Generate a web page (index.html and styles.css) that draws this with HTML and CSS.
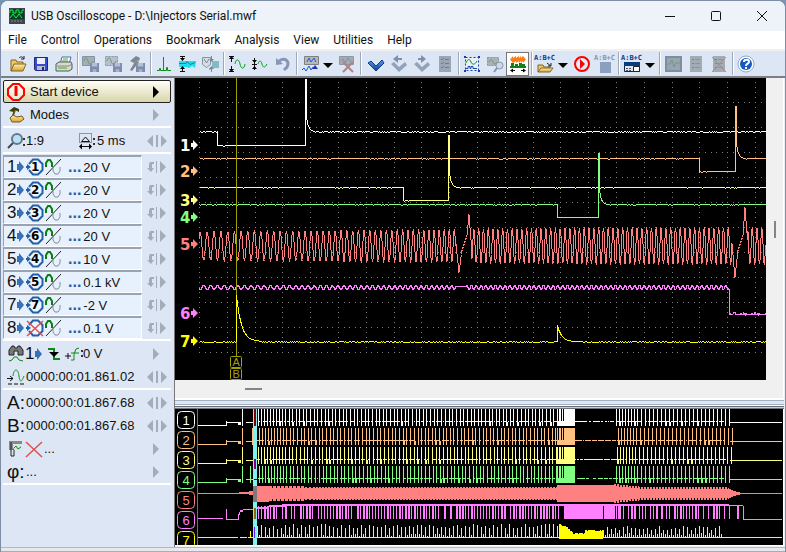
FILE: index.html
```html
<!DOCTYPE html>
<html lang="en">
<head>
  <meta charset="UTF-8">
  <meta name="viewport" content="width=device-width, initial-scale=1.0">
  <title>USB Oscilloscope</title>
  <link rel="stylesheet" href="styles.css">
</head>
<body>
  <!-- icon set -->
  <svg class="defs" width="0" height="0" aria-hidden="true">
    <linearGradient id="gold" x1="0" y1="0" x2="0" y2="1"><stop offset="0" stop-color="#fff0a8"/><stop offset="1" stop-color="#d9a032"/></linearGradient>
    <linearGradient id="blue" x1="0" y1="0" x2="0" y2="1"><stop offset="0" stop-color="#5aa0e8"/><stop offset="1" stop-color="#0a3c90"/></linearGradient>
    <symbol id="open" viewBox="0 0 18 18"><path d="M2 16V5h5l1 2h6v3" fill="#f0c860" stroke="#80642c"/><path d="M2 16l3-7h12l-3 7z" fill="url(#gold)" stroke="#80642c"/><path d="M10 3c2-2 4-1 5 1m0-3v3h-3" fill="none" stroke="#222"/></symbol>
    <symbol id="save" viewBox="0 0 18 18"><path d="M2.500 2.500h13v13h-12l-1-1z" fill="#3a4cc8" stroke="#22287c"/><path d="M5 3h8v6H5z" fill="#e8f0ff"/><path d="M5 11h8v4H5z" fill="#b8bcd0"/><path d="M10 12h2v3h-2z" fill="#22287c"/></symbol>
    <symbol id="print" viewBox="0 0 18 18"><path d="M5 9l2-7h9l-2 7z" fill="#fff" stroke="#4c6c9c"/><path d="M8 4h5M7 6h6" stroke="#50a050"/><path d="M1 9l3-2h12l1 2v5l-3 2H1z" fill="#d8dcc8" stroke="#505860"/><path d="M2 11h12M14 11l3-2" stroke="#808890" fill="none"/><path d="M3 13h9" stroke="#30b030"/></symbol>
    <symbol id="disk" viewBox="0 0 10 10"><path d="M0 0h10v10H0z" fill="#7c8cac"/><path d="M2 0h6v4H2z" fill="#b4bfd4"/><path d="M3 7h4v3H3z" fill="#a8b4c8"/></symbol>
    <symbol id="wavesave" viewBox="0 0 18 18"><path d="M.5 1.500h12v9H.5z" fill="#a2adb4" stroke="#8592a0"/><path d="M2 6c1-4 3-4 4 0s3 4 5 0" fill="none" stroke="#6f9480"/><use href="#disk" x="8" y="8" width="9" height="9"/></symbol>
    <symbol id="wavecut" viewBox="0 0 18 18"><path d="M.5 1.500h12v9H.5z" fill="#b5c0cb" stroke="#8592a0" stroke-dasharray="2 1"/><path d="M2 6c1-4 3-4 4 0s3 4 5 0" fill="none" stroke="#6f9480"/><use href="#disk" x="8" y="8" width="9" height="9"/></symbol>
    <symbol id="hammersave" viewBox="0 0 18 18"><path d="M2 6l6-5 4 2-1 3-3-1-2 3zM8 5L2 15l2 1 7-9z" fill="#7c878e"/><use href="#disk" x="8" y="8" width="9" height="9"/></symbol>
    <symbol id="peak" viewBox="0 0 18 18"><path d="M2 15.500h2.500v-2h1v2h3V2v13.500h3v-3h1v3H16" fill="none" stroke="#0a9018"/></symbol>
    <symbol id="band" viewBox="0 0 18 18"><path d="M1 6h17l-1 7-3-2-3 2-3-1H1z" fill="#1ce0f0"/><path d="M1 8.500h7l1-2 3 3 5-2" fill="none" stroke="#088898"/><path d="M2 1.500h5M2 16.500h5M4.500 2v3M4.500 12v4" stroke="#111"/><path d="M2 3h5L4.500 6zM2 14h5l-2.500-3z"/></symbol>
    <symbol id="volt" viewBox="0 0 18 18"><path d="M1.500 2.500h8v7l-4 3-4-3z" fill="#d8dee4" stroke="#8794a0"/><path d="M3 4l2.500 4L8 4M8 14h3" fill="none" stroke="#7b8893"/><path d="M11 6h7v7h-7z" fill="#82bcc2"/><path d="M10.500 1v5M10.500 12v5" stroke="#7c8993"/><path d="M8 4h5l-2.500 3zM8 14h5l-2.500-3z" fill="#7c8993"/></symbol>
    <symbol id="fit" viewBox="0 0 18 18"><path d="M1 1.500h5M1 16.500h5M3.500 2v14" stroke="#111" stroke-dasharray="5 4"/><path d="M1 4h5L3.500 1zM1 14h5l-2.500 3z"/><path d="M7 9c1-6 4-5 5 0s4 6 5 0" fill="none" stroke="#08a018"/></symbol>
    <symbol id="fitsmall" viewBox="0 0 18 18"><path d="M3.500 3v12M1 9.500h5" stroke="#111"/><path d="M1 5h5L3.500 8zM1 14h5l-2.500-3z"/><path d="M7 9c1-4 3-4 4 0s3 4 5 0" fill="none" stroke="#08a018"/></symbol>
    <symbol id="undo" viewBox="0 0 18 18"><path d="M5 6c6-4 11 0 8 6l-3 3" fill="none" stroke="#8795b8" stroke-width="3"/><path d="M2 10V3l7 6z" fill="#8795b8"/></symbol>
    <symbol id="view" viewBox="0 0 18 18"><path d="M3.500 1.500h14v8h-14z" fill="#b8b8b8" stroke="#808080"/><path d="M6 7l2-4 2 4 3-4 2 4M1 15l2-2 2 3 3-5 2 4 2-3" fill="none" stroke="#1858d8"/><path d="M11 14l3-4 3 4z" fill="#2030c0"/></symbol>
    <symbol id="viewoff" viewBox="0 0 18 18"><path d="M1.500 1.500h14v8h-14z" fill="#a6abb1" stroke="#9098a3"/><path d="M3 6l2-2 2 4 3-5 3 4" fill="none" stroke="#7d8fad"/><path d="M5 7l10 10M15 7L5 17" stroke="#ae8289" stroke-width="2"/></symbol>
    <symbol id="check" viewBox="0 0 18 18"><path d="M1 8l3-2 5 5 6-6 2 3-8 8z" fill="url(#blue)" stroke="#0b3c8a"/></symbol>
    <symbol id="checkprev" viewBox="0 0 18 18"><path d="M1 9l3-2 5 5 6-5 2 3-8 7z" fill="#91a2b9"/><path d="M3 4l5-4v3h4v2H8v3z" fill="#7d91ad"/></symbol>
    <symbol id="checknext" viewBox="0 0 18 18"><path d="M1 9l3-2 5 5 6-5 2 3-8 7z" fill="#91a2b9"/><path d="M13 4L8 0v3H5v2h3v3z" fill="#7d91ad"/></symbol>
    <symbol id="list" viewBox="0 0 18 18"><path d="M3 1h12v16H3z" fill="#98a6b8"/><path d="M5 4l1 1 2-2M9 4.500h4M5 8l1 1 2-2M9 8.500h4M5 12l1 1 2-2M9 12.500h4" fill="none" stroke="#6a7d98"/></symbol>
    <symbol id="select" viewBox="0 0 18 18"><path d="M2.500 2.500h13v13h-13z" fill="#e8f0f8" stroke="#2038a8" stroke-dasharray="2 2"/><path d="M1 1h2v2H1zM15 1h2v2h-2zM1 15h2v2H1zM15 15h2v2h-2z" fill="#2038a8"/><path d="M3 8c2-5 4-4 5-1s4 3 6-1" fill="none" stroke="#109018"/><path d="M3 13.500h2v-2h2v2h1v-2h2v2h4" fill="none" stroke="#1848a8"/></symbol>
    <symbol id="find" viewBox="0 0 18 18"><path d="M1.500 2.500h11v8h-11z" fill="#aab2b6" stroke="#8794a0" stroke-dasharray="2 1"/><path d="M3 7c1-3 3-3 4 0s3 2 4 0" fill="none" stroke="#7c927d"/><circle cx="13.500" cy="10.500" r="3.500" fill="#ced9e6" stroke="#8496b3"/><path d="M11 13l-3 4" stroke="#8496b3" stroke-width="2"/></symbol>
    <symbol id="burst" viewBox="0 0 18 18"><path d="M1 4.500L4 1v2l3-2v2l3-2v2l2-2v2l2-2 3 3.500L14 8V6l-2 2V6l-2 2V6L7 8V6L4 8z" fill="#ff7c10"/><path d="M1 12h2V9h1v3h3v-2h1v2h3V9h1v3h2v-2h1v2h2" fill="none" stroke="#108018" stroke-width="2"/><path d="M2 15.500h4M12 15.500h4" stroke="#111"/><path d="M1 15.500l3-2v4zM17 15.500l-3-2v4z"/></symbol>
    <symbol id="play" viewBox="0 0 18 18"><circle cx="9" cy="9" r="7" fill="#fff" fill-opacity=".2" stroke="red" stroke-width="2"/><path d="M7 4l5 5-5 5z" fill="red"/></symbol>
    <symbol id="folder2" viewBox="0 0 18 11"><path d="M2 10V3h5l1 2h6v2" fill="#f0c860" stroke="#80642c"/><path d="M2 10l3-4h12l-3 4z" fill="url(#gold)" stroke="#80642c"/><path d="M11 1l4 3m0-3v3h-3" fill="none" stroke="#222"/></symbol>
    <symbol id="panel2" viewBox="0 0 18 11"><path d="M1.500.5h15v9h-15z" fill="#dce6f4" stroke="#0a2850"/><path d="M1 0h16v4H1z" fill="#0a3c78"/><path d="M3 6.500h6M3 8.500h6" stroke="#555" stroke-dasharray="2 1"/><path d="M10.500 4.500h6v5h-6z" fill="#fff" stroke="#222"/></symbol>
    <symbol id="stop2" viewBox="0 0 18 11"><path d="M4 0h11v11H4z" fill="#8aa0be"/></symbol>
    <symbol id="chart" viewBox="0 0 18 18"><path d="M2 2h15v14H2z" fill="#97a4b2" stroke="#7f8d9d" stroke-width="2"/><path d="M3 9h3l2-4 2 7 2-4h4" fill="none" stroke="#6f9a82"/></symbol>
    <symbol id="sheet" viewBox="0 0 18 18"><path d="M3 1h12v16H3z" fill="#a1acb5"/><path d="M5 4.500h2M5 8.500h2M5 12.500h2" stroke="#5c966c"/><path d="M8 4.500h5M8 8.500h5M8 12.500h5" stroke="#8794a2"/></symbol>
    <symbol id="sheetx" viewBox="0 0 18 18"><use href="#sheet"/><path d="M2 2l14 15M16 2L2 17" stroke="#b38188"/></symbol>
    <symbol id="help" viewBox="0 0 18 18"><circle cx="9" cy="9" r="8" fill="#fff" stroke="#90a8d0"/><circle cx="9" cy="9" r="6" fill="#1458c0"/><path d="M7 7c0-3 5-3 5 0 0 2-3 1-3 4m0 1v2" fill="none" stroke="#fff" stroke-width="2"/></symbol>
    <symbol id="power" viewBox="0 0 18 18"><path d="M6 1h6l5 5v6l-5 5H6l-5-5V6z" fill="#fff" fill-opacity=".4" stroke="red" stroke-width="2"/><path d="M9 3v10" stroke="red" stroke-width="3"/></symbol>
    <symbol id="modes" viewBox="0 0 18 18"><path d="M2 5l5-4 5 2v3L8 4 7 6z" fill="#343c10"/><path d="M8 4l-3 8" stroke="#5c4c10" stroke-width="2"/><path d="M3 12l3-3 4 2 5-1 2 3-4 3H5z" fill="url(#gold)" stroke="#785818"/></symbol>
    <symbol id="lens" viewBox="0 0 18 18"><circle cx="10" cy="7" r="5" fill="#b8e0f8" stroke="#687888" stroke-width="2"/><path d="M6 11l-5 5" stroke="#404850" stroke-width="2"/><path d="M16 6h2v2h-2zM16 12h2v2h-2z" fill="#333"/></symbol>
    <symbol id="timebase" viewBox="0 0 18 18"><path d="M1.500 1.500h12v9h-12z" fill="none" stroke="#444" stroke-dasharray="1 1"/><path d="M3.500 9.500h8L7.500 5z" fill="none" stroke="#111"/><path d="M3 14.500h9" stroke="#111"/><path d="M1 14.500l3-3v6zM14 14.500l-3-3v6z"/><path d="M15 6h2v2h-2zM15 11h2v2h-2z" fill="#333"/></symbol>
    <symbol id="input" viewBox="0 0 8 12"><path d="M1 3h2V0l5 6-5 6V9H1z" fill="#3a70b4"/></symbol>
    <symbol id="oct" viewBox="0 0 18 18"><path d="M3 6l4-4.500h5L16.500 6v6L12 16.500H7L3 12" fill="#eef6ff" stroke="#2460a8" stroke-width="2"/><path d="M0 8h1V6l4 3-4 3v-2H0z" fill="#2460a8"/></symbol>
    <symbol id="acdc" viewBox="0 0 18 18"><path d="M1 9V5l2-3h2l2 3v4" fill="none" stroke="#088010" stroke-width="2"/><path d="M1 17L16 1" stroke="#222"/><path d="M8 9v4l2 3h3l2-3V9" fill="none" stroke="#889098"/></symbol>
    <symbol id="redx" viewBox="0 0 18 18"><path d="M1 2l16 15M17 2L1 17" stroke="#e05050" stroke-width="1.500"/></symbol>
    <symbol id="step" viewBox="0 0 20 14"><path d="M0 7l6-6v12zM20 7l-6-6v12zM9 1h2v12H9z" fill="#a3adba"/></symbol>
    <symbol id="invert" viewBox="0 0 20 14"><path d="M3 2h4v2H5v4h2l-3 4-4-4h2V4zM9 1h1v12H9zM13 1l6 6-6 6z" fill="#a3adba"/></symbol>
    <symbol id="next" viewBox="0 0 8 12"><path d="M1 0l6 6-6 6z" fill="currentColor"/></symbol>
    <symbol id="drop" viewBox="0 0 10 6"><path d="M0 0h10L5 5z"/></symbol>
    <symbol id="search" viewBox="0 0 18 18"><path d="M2 10V5l3-4h2l1 2h2l1-2h2l3 4v5h-5V6H7v4z" fill="#787878" stroke="#222"/><path d="M2 16l3-1 2-3h3l2 3 4 1" fill="none" stroke="#108818"/></symbol>
    <symbol id="falling" viewBox="0 0 14 14"><path d="M1 2h6v10h6" fill="none" stroke="#108818" stroke-width="2"/><path d="M2 5h10L7 10z"/></symbol>
    <symbol id="level" viewBox="0 0 18 16"><path d="M0 10h6M3 7v6" stroke="#111"/><path d="M6 14h3V8l2-5 3-1M6 7h8" fill="none" stroke="#108818"/><path d="M16 4h2v2h-2zM16 9h2v2h-2z" fill="#333"/></symbol>
    <symbol id="timepos" viewBox="0 0 18 18"><path d="M0 10.500h6M3 8l3 2.500L3 13" fill="none" stroke="#111"/><path d="M6 8c1-8 5-8 6 0s3 5 5 0" fill="none" stroke="#109018"/><path d="M1 16h16" stroke="#777" stroke-width="2" stroke-dasharray="4 2"/></symbol>
    <symbol id="caliper" viewBox="0 0 18 18"><path d="M2 1h13v3H6v4H2z" fill="#888"/><path d="M2 9h7M4 2v14h3V9" stroke="#222" fill="none"/><path d="M6 5h8v5H7z" fill="#d8e4d8"/><path d="M7 8l2-2 2 3 3-2" stroke="#109018" fill="none"/></symbol>
    <symbol id="app" viewBox="0 0 16 16"><path d="M0 0h16v16H0z" fill="#3c4650"/><path d="M1 1h14v10H1z" fill="#063c28"/><path d="M1 5V2h3v3h3V2h3v3h3V2h2M1 10l3-4 3 4 3-4 3 4" fill="none" stroke="#18f040"/><path d="M2 13h12" stroke="#888" stroke-dasharray="2 1"/></symbol>
  </svg>

  <div class="window">
    <header class="titlebar">
      <svg class="app-icon"><use href="#app"/></svg>
      <h1>USB Oscilloscope - D:\Injectors Serial.mwf</h1>
      <button class="win" aria-label="Minimize"><svg viewBox="0 0 12 12"><path d="M1 6.500h10"/></svg></button>
      <button class="win" aria-label="Maximize"><svg viewBox="0 0 12 12"><rect x="1.500" y="1.500" width="9" height="9" rx="1"/></svg></button>
      <button class="win" aria-label="Close"><svg viewBox="0 0 12 12"><path d="M1 1l10 10M11 1L1 11"/></svg></button>
    </header>

    <nav class="menu">
      <button>File</button>
      <button>Control</button>
      <button>Operations</button>
      <button>Bookmark</button>
      <button>Analysis</button>
      <button>View</button>
      <button>Utilities</button>
      <button>Help</button>
    </nav>

    <div class="toolbar">
      <button aria-label="Open"><svg><use href="#open"/></svg></button>
      <button aria-label="Save"><svg><use href="#save"/></svg></button>
      <button aria-label="Print"><svg><use href="#print"/></svg></button>
      <i class="sep"></i>
      <button aria-label="Save waveform"><svg><use href="#wavesave"/></svg></button>
      <button aria-label="Save selection"><svg><use href="#wavecut"/></svg></button>
      <button aria-label="Save settings"><svg><use href="#hammersave"/></svg></button>
      <i class="sep"></i>
      <button aria-label="Spectrum"><svg><use href="#peak"/></svg></button>
      <button aria-label="Envelope"><svg><use href="#band"/></svg></button>
      <button aria-label="Voltage"><svg><use href="#volt"/></svg></button>
      <i class="sep"></i>
      <button aria-label="Fit height"><svg><use href="#fit"/></svg></button>
      <button aria-label="Reduce height"><svg><use href="#fitsmall"/></svg></button>
      <button aria-label="Undo"><svg><use href="#undo"/></svg></button>
      <i class="sep"></i>
      <button aria-label="Add view"><svg><use href="#view"/></svg></button>
      <button class="drop" aria-label="View list"><svg><use href="#drop"/></svg></button>
      <button aria-label="Remove view"><svg><use href="#viewoff"/></svg></button>
      <i class="sep band"></i>
      <button aria-label="Bookmark"><svg><use href="#check"/></svg></button>
      <button aria-label="Previous bookmark"><svg><use href="#checkprev"/></svg></button>
      <button aria-label="Next bookmark"><svg><use href="#checknext"/></svg></button>
      <button aria-label="Bookmark list"><svg><use href="#list"/></svg></button>
      <i class="sep"></i>
      <button aria-label="Select"><svg><use href="#select"/></svg></button>
      <button aria-label="Zoom to selection"><svg><use href="#find"/></svg></button>
      <button class="on" aria-label="Compress"><svg><use href="#burst"/></svg></button>
      <i class="sep"></i>
      <button class="abc" aria-label="Open script"><span>A:B+C</span><svg><use href="#folder2"/></svg></button>
      <button class="drop" aria-label="Script list"><svg><use href="#drop"/></svg></button>
      <button aria-label="Run"><svg><use href="#play"/></svg></button>
      <button class="abc off" aria-label="Stop"><span>A:B+C</span><svg><use href="#stop2"/></svg></button>
      <i class="sep"></i>
      <button class="abc" aria-label="Script panel"><span>A:B+C</span><svg><use href="#panel2"/></svg></button>
      <button class="drop" aria-label="Panel list"><svg><use href="#drop"/></svg></button>
      <i class="sep"></i>
      <button aria-label="Chart"><svg><use href="#chart"/></svg></button>
      <button aria-label="Report"><svg><use href="#sheet"/></svg></button>
      <button aria-label="Delete report"><svg><use href="#sheetx"/></svg></button>
      <i class="sep"></i>
      <button aria-label="Help"><svg><use href="#help"/></svg></button>
    </div>

    <main>
      <aside class="side">
        <div class="group">
          <button class="row start"><svg class="ic"><use href="#power"/></svg><span>Start device</span><svg class="next"><use href="#next"/></svg></button>
          <button class="row"><svg class="ic"><use href="#modes"/></svg><span>Modes</span><svg class="next"><use href="#next"/></svg></button>
        </div>
        <div class="group">
          <div class="row scale">
            <svg class="ic"><use href="#lens"/></svg><span class="zoom">1:9</span>
            <svg class="ic"><use href="#timebase"/></svg><span>5 ms</span>
            <svg class="step"><use href="#step"/></svg>
          </div>
        </div>
        <div class="group" id="channels"></div>
        <div class="group">
          <div class="row trigger">
            <svg class="ic"><use href="#search"/></svg><b>1</b><svg class="in"><use href="#input"/></svg>
            <svg class="edge"><use href="#falling"/></svg><svg class="ic"><use href="#level"/></svg><span>0 V</span>
            <svg class="next"><use href="#next"/></svg>
          </div>
          <div class="row tight"><svg class="ic"><use href="#timepos"/></svg><span>0000:00:01.861.02</span><svg class="step"><use href="#step"/></svg></div>
        </div>
        <div class="group">
          <div class="row tight"><span class="mark">A:</span><span>0000:00:01.867.68</span><svg class="step"><use href="#step"/></svg></div>
          <div class="row tight"><span class="mark">B:</span><span>0000:00:01.867.68</span><svg class="step"><use href="#step"/></svg></div>
          <div class="row tight"><svg class="ic"><use href="#caliper"/></svg><svg class="ic"><use href="#redx"/></svg><span>...</span><svg class="next"><use href="#next"/></svg></div>
          <div class="row tight"><span class="mark">φ:</span><span>...</span><svg class="next"><use href="#next"/></svg></div>
        </div>
      </aside>

      <section class="plots">
        <div class="scope">
          <svg id="scope" viewBox="0 0 591 302" role="img" aria-label="Channel waveforms"></svg>
          <div class="vscroll"><i></i></div>
          <div class="hscroll"><i></i></div>
        </div>
        <div class="splitter"></div>
        <div class="overview">
          <svg id="overview" viewBox="0 0 608 136" role="img" aria-label="Whole recording"></svg>
        </div>
      </section>
    </main>
    <footer></footer>
  </div>
  <script src="scope.js"></script>
</body>
</html>
```

FILE: styles.css
```css
* {
  box-sizing: border-box;
}
body {
  margin: 0;
  background: #7895b4;
  font-family: Roboto, "Open Sans", sans-serif;
  font-size: 12px;
  color: #111;
}
button {
  font: inherit;
  color: inherit;
  background: none;
  border: none;
  padding: 0;
}
svg {
  display: block;
  flex: none;
}
.defs {
  position: absolute;
}
.window {
  display: flex;
  flex-direction: column;
  min-height: 100vh;
  border: 1px solid #7d8da3;
  border-bottom: none;
  border-radius: 8px 8px 0 0;
  overflow: hidden;
  background: #f0f0f0;
}

/* title and menu */
.titlebar {
  display: flex;
  align-items: center;
  height: 30px;
  padding-left: 8px;
  background: #eef2f9;
}
.titlebar h1 {
  flex: 1;
  margin: 0 0 0 6px;
  font-size: 12px;
  font-weight: 400;
}
.app-icon {
  width: 16px;
  height: 16px;
}
.win {
  width: 46px;
  height: 30px;
}
.win svg {
  width: 12px;
  height: 12px;
  margin: auto;
  fill: none;
  stroke: #111;
}
.menu {
  display: flex;
  gap: 14px;
  height: 20px;
  padding-left: 7px;
  background: #fff;
  border-bottom: 2px solid #f0f0f0;
}
.menu button {
  line-height: 18px;
}

/* toolbar */
.toolbar {
  display: flex;
  align-items: center;
  height: 27px;
  padding-left: 5px;
  background: #dce6f4;
  border-bottom: 2px solid #7b7e84;
}
.toolbar button {
  display: flex;
  align-items: center;
  justify-content: center;
  flex: none;
  width: 23px;
  height: 24px;
}
.toolbar svg {
  width: 18px;
  height: 18px;
}
.toolbar .drop {
  width: 14px;
}
.toolbar .drop svg {
  width: 10px;
  height: 6px;
  margin-top: 4px;
}
.toolbar .on {
  background: #fff;
  border: 1px solid #777;
}
.toolbar .abc {
  flex-direction: column;
}
.toolbar .abc span {
  font: bold 7px/8px "DejaVu Sans Mono", monospace;
  color: #0a3c90;
}
.toolbar .off span {
  color: #8496b0;
}
.toolbar .abc svg {
  height: 11px;
}
.sep {
  flex: none;
  width: 2px;
  height: 23px;
  margin-left: 2px;
  border-left: 1px solid #a0a8b4;
  border-right: 1px solid #fff;
}
.sep.band {
  margin-right: 2px;
}

/* left panel */
main {
  display: flex;
  flex: 1;
}
.side {
  flex: none;
  width: 173px;
  padding: 2px 3px 0 2px;
  background: #dde6f5;
  font: 13px "Liberation Sans", sans-serif;
}
.group {
  margin-bottom: 1px;
  border-bottom: 2px solid #fff;
  border-image: linear-gradient(#9aa3af 50%, #fff 50%) 2;
}
.row {
  display: flex;
  align-items: center;
  width: 100%;
  height: 23px;
  padding: 0 4px;
  text-align: left;
}
.row span {
  white-space: pre;
}
.row .ic {
  width: 18px;
  height: 18px;
}
.row > .next,
.row > .step {
  margin-left: auto;
}
.row .ic + span {
  margin-left: 5px;
}
.row.tight .ic + span,
.row.scale .ic + span {
  margin-left: 1px;
}
.zoom {
  width: 52px;
}
.next {
  width: 8px;
  height: 12px;
  margin-right: 7px;
  color: #a3adba;
}
.step {
  width: 20px;
  height: 14px;
}
.start {
  background: linear-gradient(#fffff4, #d8d4ac);
  border: 1px solid #222;
  border-radius: 2px;
  padding: 0 3px;
}
.start .next {
  color: #000;
}
.channel {
  display: flex;
  align-items: center;
}
.cell {
  display: flex;
  align-items: center;
  width: 139px;
  height: 23px;
  padding-left: 3px;
  background: #e6f1fd;
  border: 1px solid #fff;
  border-top: 2px solid #9aa3af;
  border-left-color: #9aa3af;
}
.channel .step {
  margin-left: 5px;
}
.cell b,
.trigger b {
  width: 9px;
  font: 17px "Liberation Sans", sans-serif;
}
.in {
  width: 8px;
  height: 12px;
}
.plug {
  width: 18px;
  height: 18px;
  margin: 0 1px 0 2px;
}
.plug text {
  font: bold 12px "DejaVu Sans", sans-serif;
}
.cell .dots {
  margin: 0 2px 0 5px;
  font-size: 16px;
  font-weight: bold;
  color: #2460a8;
}
.edge {
  width: 14px;
  height: 14px;
  margin: 0 4px 0 5px;
}
.row.trigger .ic + span {
  margin-left: 0;
}
.mark {
  width: 19px;
  font: 19px "Liberation Sans", sans-serif;
}

/* plots */
.plots {
  flex: 1;
  min-width: 0;
  padding-right: 1px;
  border-left: 1px solid #777;
}
.scope {
  display: grid;
  grid-template-columns: 1fr 17px;
  grid-template-rows: auto 17px;
  border-right: 1px solid #fff;
}
.scope svg,
.overview svg {
  width: 100%;
  background: #000;
}
.vscroll {
  display: flex;
  align-items: center;
  justify-content: center;
}
.vscroll i {
  width: 2px;
  height: 17px;
  background: #858585;
}
.hscroll i {
  display: block;
  width: 17px;
  height: 2px;
  margin: 8px 0 0 70px;
  background: #858585;
}
.splitter {
  height: 12px;
  background: linear-gradient(#f0f0f0 1px, #fff 1px 3px, #a4afc0 3px 4px, #dde6f5 4px 7px, #a4afc0 7px 8px, #fff 8px 9px, #6b6e74 9px 10px, #c4d2e4 10px 11px, #6b7684 11px);
}
.overview {
  border-right: 1px solid #fff;
  border-bottom: 1px solid #fff;
}
#scope text {
  font: bold 15px "DejaVu Sans", sans-serif;
}
#scope .flag {
  font: 11px "Liberation Sans", sans-serif;
  fill: #a0a000;
}
#overview text {
  font: 13px "Liberation Sans", sans-serif;
  text-anchor: middle;
}
footer {
  height: 5px;
  background: #e8e8ec;
  border-top: 1px solid #b4b8c0;
  border-bottom: 1px solid #a8acb8;
}
```

FILE: scope.js
```javascript
const colors = ['#ffffff', '#ffc080', '#ffff80', '#80ff80', '#ff8080', '#ff80ff', '#ffff00'];

// left panel: channel, input plug, range
const channels = [
  ['1', '1', '20 V'], ['2', '2', '20 V'], ['3', '3', '20 V'], ['4', '6', '20 V'],
  ['5', '4', '10 V'], ['6', '5', '0.1 kV'], ['7', '7', '-2 V'], ['8', '', '0.1 V']
];
document.getElementById('channels').innerHTML = channels.map(([n, plug, range]) => `
  <div class="channel">
    <div class="cell"><b>${n}</b><svg class="in"><use href="#input"/></svg>
      <svg class="plug" viewBox="0 0 18 18"><use href="#oct"/>${plug ? `<text x="5" y="13">${plug}</text>` : '<use href="#redx"/>'}</svg>
      <svg class="ic" width="18" height="18"><use href="#acdc"/></svg>
      <span class="dots">...</span><span>${range}</span></div>
    <svg class="step"><use href="#invert"/></svg>
  </div>`).join('');

let seed = 7;
const rnd = () => (seed = (seed * 16807) % 2147483647) / 2147483647;
const line = (pts, color) =>
  `<polyline points="${pts.map(p => p[0] + ',' + p[1]).join(' ')}" fill="none" stroke="${color}" shape-rendering="crispEdges"/>`;
const path = (d, color) => `<path d="${d}" fill="${color}" shape-rendering="crispEdges"/>`;
const rect = (x, y, w, h) => `M${x} ${y}h${w}v${h}h${-w}z`;

// ---- main scope ----
let out = '';
let dots = '';
for (let k = 0; k <= 20; k++) {
  for (let y = 4; y <= 274; y += 5) dots += rect(Math.round(24 + 27.8 * k), y, 1, 1);
}
for (let j = 0; j <= 10; j++) {
  for (let x = 24; x < 590; x += 5.56) dots += rect(Math.round(x), 24 + 25 * j, 1, 1);
}
out += path(dots, '#808080');

// injector pulse: base level, low level, open, close, top of the spike
function injector(base, low, x1, x2, top, noise) {
  const pts = [];
  for (let x = 24; x <= 590; x++) {
    let y = base + (rnd() < noise ? 1 : 0);
    if (x >= x1 && x < x2) y = low + (x < x1 + 8 && rnd() < .4 ? 1 : 0);
    if (x === x1) pts.push([x + .5, base]);
    if (x === x2) {
      pts.push([x + .5, low], [x + .5, top], [x + 1.5, top]);
      y = base - (base - top) * .45;
    } else if (x > x2 && x < x2 + 10) {
      y = base - (base - top) * .45 * Math.exp(-(x - x2) / 2);
    }
    pts.push([x + (x === x2 ? 1.5 : .5), y]);
  }
  return pts;
}
out += line(injector(53.5, 67.5, 42, 130, 1.5, .45), colors[0]);
out += line(injector(80.5, 93.5, 524, 560, 28.5, .1), colors[1]);
out += line(injector(109.5, 122.5, 228, 273, 57.5, .1), colors[2]);
out += line(injector(126.5, 139.5, 382, 423, 75.5, .15), colors[3]);

// crankshaft and supply ripple share the tooth phase
const crank = [];
const ripple = [];
let phase = 0;
for (let x = 24; x < 591; x += .5) {
  const period = x < 210 ? 7 - (x - 24) / 124 : Math.max(4.8, 5.5 - (x - 210) / 130);
  phase += .5 / period;
  const amp = x < 210 ? 14 + (x - 24) / 120 : Math.min(18, 15.5 + (x - 210) / 90);
  let y = 167.5 - amp * Math.sin(phase * 2 * Math.PI);
  for (const [g, lo, hi] of [[281, 194, 136], [557, 199, 129]]) {
    const t = x - g;
    if (t >= 0 && t < 16) {
      if (t < 3) y = 165 + (lo - 165) * t / 3;
      else if (t < 6) y = lo - (lo - 172) * (t - 3) / 3;
      else if (t < 11) y = 172 - 15 * (t - 6) / 5;
      else if (t < 13) y = 157 - (157 - hi) * (t - 11) / 2;
      else y = hi + 38 * (t - 13) / 3;
    }
  }
  crank.push([x, Math.round(y) + .5]);
  let r = 209 + 2 * Math.sin(phase * 2 * Math.PI);
  if (x > 281 && x < 292) r = 208;
  if (x > 554) r = x > 558 && x < 561 ? 234 : 236 - (rnd() < .25 ? 1 : 0);
  ripple.push([x, Math.round(r) + .5]);
}
out += line(crank, colors[4]) + line(ripple, colors[5]);
out += path(rect(61, 0, 1, 278), '#a0a000');

// sync pulses on channel 7
const sync = [];
for (let x = 24; x <= 590; x++) {
  let y = 264 + (rnd() < .4 ? -1 : 0);
  for (const [x0, h, tau] of [[61, 46, 5], [382, 16, 4]]) {
    if (x === x0) sync.push([x + .5, 263.5]);
    if (x >= x0 && x < x0 + 26) y = Math.min(y, 263 - h * Math.exp(-(x - x0) / tau));
  }
  sync.push([x + .5, Math.round(y) + .5]);
}
out += line(sync, colors[6]);

[67, 93, 122, 139, 166, 235, 263].forEach((y, i) => {
  out += `<text x="5" y="${y + 6}" fill="${colors[i]}">${i + 1}</text>` +
    `<path d="M16 ${y}v-2h2v-3l5 5-5 5v-3h-2z" fill="${colors[i]}"/>`;
});
['A', 'B'].forEach((t, i) => {
  out += `<rect x="55.5" y="${278.5 + 12 * i}" width="11" height="11" rx="1" fill="#000" stroke="#a0a000"/>` +
    `<text class="flag" x="57.5" y="${288 + 12 * i}">${t}</text>`;
});
document.getElementById('scope').innerHTML = out;

// ---- overview of the whole recording ----
out = path(rect(22, 0, 1, 136), '#707070');
out += path(rect(78, 0, 4, 136), '#80f0f0');

for (let i = 0; i < 4; i++) {
  const y = 19 * i;
  let d = rect(23, y + 16, 28, 1) + rect(51, y + 12, 1, 5) + rect(51, y + 13, 13, 1);
  d += rect(63, y + 13, 3, 3) + rect(67, y, 1, 17) + rect(71, y + 13, 7, 1);
  if (i === 1) d += rect(77, y, 1, 17);
  if (i === 3) d += rect(75, y, 1, 17);
  // cranking up, steady running, then a second run after the cut-off
  for (let x = 83 + i % 2; x < 382;) {
    d += rect(Math.round(x), y, 1, 17);
    if (rnd() < .14) d += rect(Math.round(x) + 1, y + 13, 1, 4);
    x += x < 110 ? 3 : 3.5 + rnd() * .3;
  }
  for (let x = 82; x < 382; x++) if (rnd() < .72) d += rect(x, y + 12, 1, 1);
  d += rect(382, y, 1, 17) + rect(384, y, 2, 17) + rect(382, y + 12, 7, 5) + rect(387, y, 1, 17);
  d += rect(389, y, 11, 17);
  for (let x = 400; x < 551; x++) if (rnd() < .8) d += rect(x, y + 12, 1, 1);
  for (let x = 441 + (i * 2) % 3; x < 558;) {
    d += rect(Math.round(x), y, 1, 17);
    if (rnd() < .15) d += rect(Math.round(x) + 1, y + 13, 1, 4);
    x += x < 460 ? 3 : 4;
  }
  d += rect(555, y + 13, 52, 1);
  out += path(d, colors[i]);
}
// traces seen through the position marker
out += path(rect(79, 0, 2, 17), '#800000') + path(rect(79, 50, 2, 10), '#800080') + path(rect(79, 70, 3, 1), '#000080');
out += path(rect(78, 77, 4, 16), '#807878') + path(rect(79, 99, 2, 11), '#807000') + path(rect(79, 118, 1, 11), '#6020ff');

let d = rect(23, 84, 42, 1) + rect(64, 83, 10, 2) + rect(74, 82, 4, 4);
d += rect(82, 77, 12, 16) + rect(94, 79, 288, 11);
for (let x = 94; x < 382; x += x < 135 ? 4 : 3) {
  d += x < 130 ? rect(x, 77, 3, 15) : rect(x, 78, 2, 13);
}
d += rect(382, 76, 57, 17);
for (let x = 439; x < 553; x++) {
  const k = Math.min(1, (x - 439) / 30);
  const tooth = x % 3 ? 2 : 0;
  const top = Math.round(77 + k * 3 - tooth);
  d += rect(x, top, 1, 2 * (85 - top) - 1);
}
[5, 4, 4, 3, 3, 2, 2, 2, 1, 1, 1, 1].forEach((h, k) => {
  d += rect(553 + k, 84 - h, 1, 2 * h + 1);
});
d += rect(560, 84, 47, 1);
out += path(d, colors[4]);

d = rect(23, 109, 25, 1) + rect(51, 100, 1, 11) + rect(52, 110, 11, 1) + rect(63, 105, 1, 6);
d += rect(64, 103, 1, 3) + rect(65, 101, 3, 2) + rect(68, 100, 10, 1) + rect(82, 98, 12, 2) + rect(94, 96, 16, 2) + rect(107, 95, 282, 2);
for (let x = 83; x < 387; x += 3) {
  if (rnd() < .9) d += rect(x, 97, rnd() < .35 ? 2 : 1, 13);
}
d += rect(389, 95, 39, 15) + rect(428, 95, 126, 2) + rect(553, 96, 15, 1);
for (let x = 429; x < 556;) {
  d += rect(x, 97, rnd() < .4 ? 2 : 1, 13);
  x += x < 445 ? 2 : rnd() < .4 ? 5 : 3;
}
d += rect(562, 97, 2, 13) + rect(568, 97, 1, 13) + rect(568, 110, 39, 1);
out += path(d, colors[5]);

d = rect(23, 128, 40, 1) + rect(65, 128, 7, 1) + rect(75, 122, 1, 6) + rect(73, 128, 5, 1);
for (let x = 82; x < 384; x += 2) {
  const tall = (x - 82) % 4 === 0;
  const h = tall ? (x < 115 ? 9 : 10) + Math.floor(rnd() * 5) : Math.floor(rnd() * 5);
  d += rect(x, 129 - h, 1, h);
}
d += rect(82, 128, 302, 1);
for (let x = 384; x < 428; x++) {
  const h = x < 393 ? 13 - (x - 384) * .3 : x < 398 ? 9 - (x - 393) : x < 410 ? 4 : 7;
  const top = Math.round(129 - h - rnd());
  d += rect(x, top, 1, 130 - top);
}
for (let x = 428; x < 547; x += 2) {
  const h = (x - 428) % 4 === 0 ? 8 + Math.floor(rnd() * 5) : 2 + Math.floor(rnd() * 4);
  d += rect(x, 129 - h, 1, h);
}
d += rect(428, 128, 179, 1);
out += path(d, colors[6]);

colors.forEach((c, i) => {
  out += `<rect x="2.5" y="${2.5 + 20 * i}" width="17" height="17" rx="4" fill="#000" stroke="${c}"/>` +
    `<text x="11" y="${16 + 20 * i}" fill="${c}">${i + 1}</text>`;
});
document.getElementById('overview').innerHTML = out;
```
